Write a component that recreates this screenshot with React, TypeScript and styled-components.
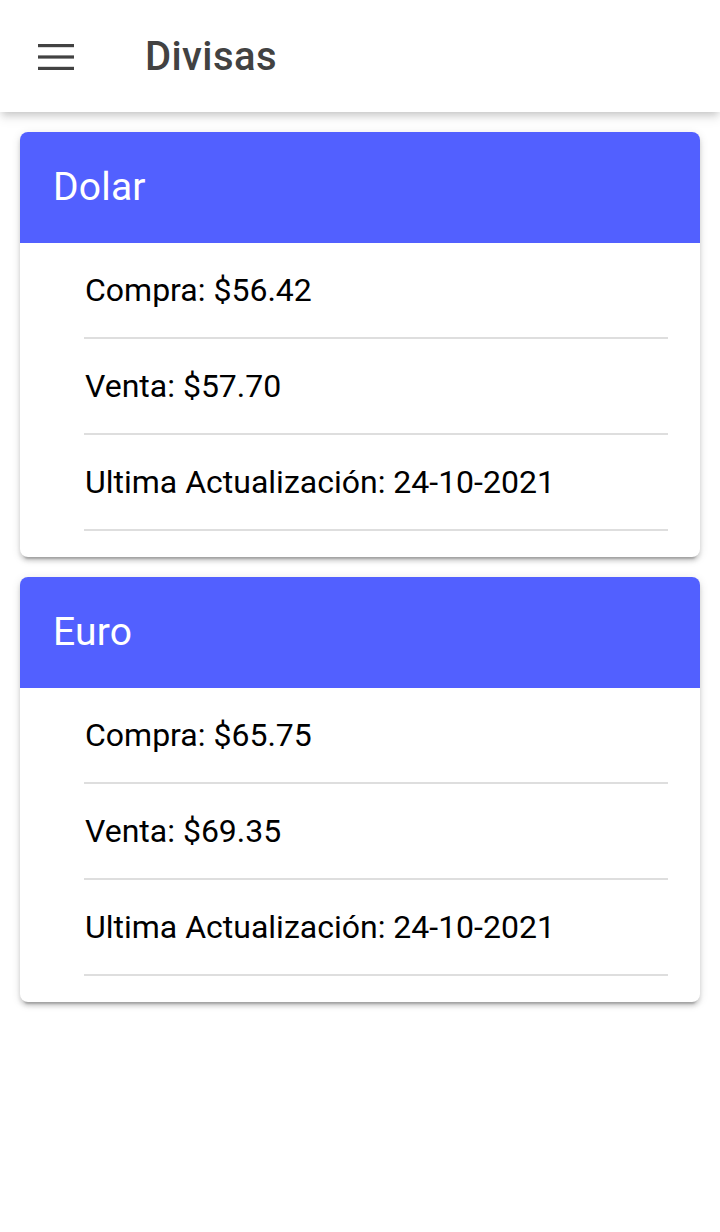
import React from "react";
import styled, { createGlobalStyle } from "styled-components";

const Global = createGlobalStyle`
  html, body { margin: 0; padding: 0; background: #ffffff; }
  body { font-family: Roboto, "Noto Sans", sans-serif; -webkit-font-smoothing: antialiased; }
  * { box-sizing: border-box; }
`;

const Page = styled.div`
  width: 720px;
  min-height: 1232px;
  background: #fff;
  display: flex;
  flex-direction: column;
`;

const Toolbar = styled.header`
  position: relative;
  z-index: 2;
  height: 112px;
  display: flex;
  align-items: center;
  padding-left: 38px;
  padding-top: 2px;
  background: #fff;
  box-shadow: 0 4px 8px -2px rgba(0, 0, 0, 0.2), 0 8px 10px 0 rgba(0, 0, 0, 0.06);
`;

const MenuButton = styled.button`
  border: 0;
  background: transparent;
  padding: 0;
  width: 36px;
  height: 36px;
  display: flex;
  align-items: center;
  justify-content: center;
  color: #424242;
`;

const Title = styled.h1`
  margin: 0 0 0 71px;
  font-family: Roboto, sans-serif;
  font-weight: 500;
  font-size: 40px;
  letter-spacing: 0.4px;
  color: #424242;
  line-height: 1;
`;

const Content = styled.main`
  display: flex;
  flex-direction: column;
  gap: 20px;
  padding: 20px 20px;
`;

const Card = styled.section`
  border-radius: 8px;
  overflow: hidden;
  background: #fff;
  box-shadow: 0 6px 2px -4px rgba(0, 0, 0, 0.2), 0 4px 4px 0 rgba(0, 0, 0, 0.14),
    0 2px 10px 0 rgba(0, 0, 0, 0.12);
`;

const CardHeader = styled.div`
  height: 111px;
  background: #5260ff;
  display: flex;
  align-items: center;
  padding-left: 33px;
`;

const CardTitle = styled.h2`
  margin: 0;
  font-family: Roboto, sans-serif;
  font-weight: 400;
  font-size: 39px;
  letter-spacing: 0.2px;
  color: #fff;
  line-height: 1;
`;

const List = styled.ul`
  list-style: none;
  margin: 0;
  padding: 0 32px 26px 64px;
`;

const Item = styled.li`
  height: 96px;
  display: flex;
  align-items: center;
  border-bottom: 2px solid #dedede;
  font-family: Roboto, sans-serif;
  font-size: 32px;
  color: #000;
`;

const ItemText = styled.span`
  margin-left: 1px;
`;

type Currency = { name: string; compra: string; venta: string; fecha: string };

const data: Currency[] = [
  { name: "Dolar", compra: "$56.42", venta: "$57.70", fecha: "24-10-2021" },
  { name: "Euro", compra: "$65.75", venta: "$69.35", fecha: "24-10-2021" },
];

const MenuIcon = () => (
  <svg width="36" height="26" viewBox="0 0 36 26" aria-hidden>
    <rect x="0" y="0" width="36" height="3.2" fill="currentColor" />
    <rect x="0" y="11.4" width="36" height="3.2" fill="currentColor" />
    <rect x="0" y="22.8" width="36" height="3.2" fill="currentColor" />
  </svg>
);

export default function App() {
  return (
    <>
      <Global />
      <Page>
        <Toolbar>
          <MenuButton aria-label="menu">
            <MenuIcon />
          </MenuButton>
          <Title>Divisas</Title>
        </Toolbar>
        <Content>
          {data.map((c) => (
            <Card key={c.name}>
              <CardHeader>
                <CardTitle>{c.name}</CardTitle>
              </CardHeader>
              <List>
                <Item>
                  <ItemText>Compra: {c.compra}</ItemText>
                </Item>
                <Item>
                  <ItemText>Venta: {c.venta}</ItemText>
                </Item>
                <Item>
                  <ItemText>Ultima Actualización: {c.fecha}</ItemText>
                </Item>
              </List>
            </Card>
          ))}
        </Content>
      </Page>
    </>
  );
}
